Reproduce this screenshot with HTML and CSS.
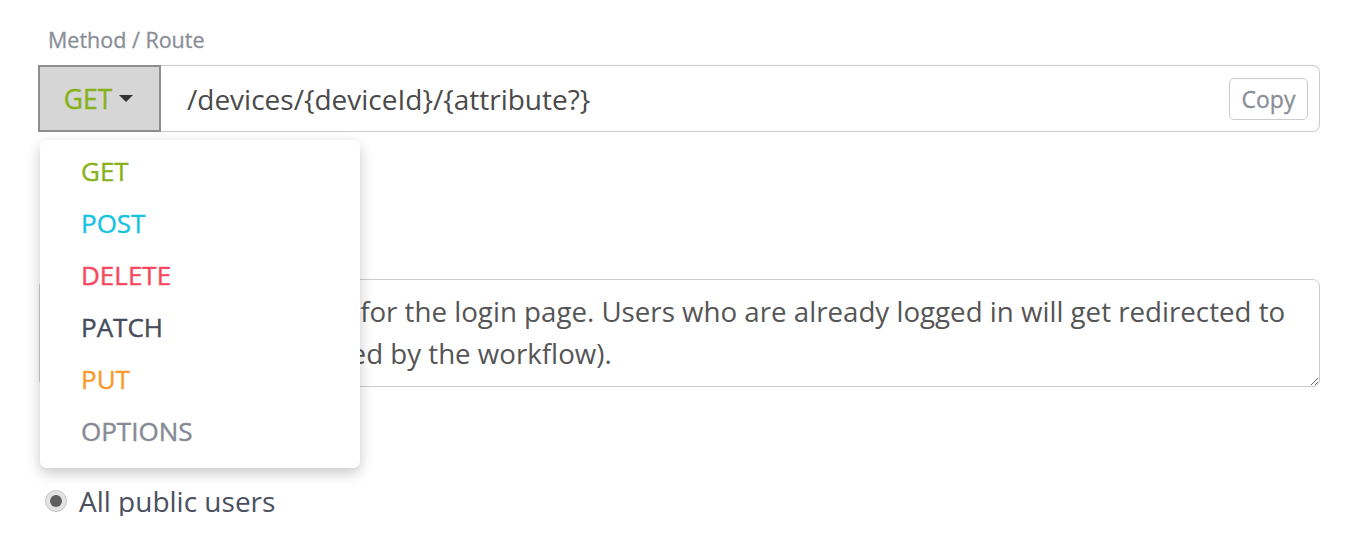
FILE: index.html
```html
<!DOCTYPE html>
<html>
<head>
<meta charset="utf-8">
<link rel="stylesheet" href="styles.css">
</head>
<body>
<div class="form">
  <div class="label">Method / Route</div>
  <div class="route-row">
    <div class="method-select">
      <span class="method get">GET</span>
      <span class="caret"></span>
    </div>
    <div class="route-input">
      <span class="route-text">/devices/{deviceId}/{attribute?}</span>
      <button class="copy-btn">Copy</button>
    </div>
    <ul class="menu">
      <li class="menu-item get">GET</li>
      <li class="menu-item post">POST</li>
      <li class="menu-item delete">DELETE</li>
      <li class="menu-item patch">PATCH</li>
      <li class="menu-item put">PUT</li>
      <li class="menu-item options">OPTIONS</li>
    </ul>
  </div>
  <textarea class="desc">Set a default route for the login page. Users who are already logged in will get redirected to
the  page (as defined by the workflow).</textarea>
  <label class="radio-row">
    <span class="radio"><span class="dot"></span></span>
    <span class="radio-text">All public users</span>
  </label>
</div>
</body>
</html>
```
FILE: styles.css
```css
html, body {
  margin: 0;
  padding: 0;
  background: #ffffff;
}
body {
  font-family: "Open Sans", "Noto Sans", sans-serif;
}
.form {
  padding: 27px 40px 0 38px;
  display: flex;
  flex-direction: column;
}
.label {
  font-size: 21.5px;
  line-height: 26px;
  color: #8a8e97;
  -webkit-text-stroke: 0.3px #8a8e97;
  padding-left: 10px;
  margin-bottom: 12px;
}
.route-row {
  position: relative;
  display: flex;
  height: 67px;
}
.method-select {
  box-sizing: border-box;
  width: 123px;
  height: 67px;
  background: #d6d6d6;
  border: 2px solid #8e8e8e;
  display: flex;
  align-items: center;
  justify-content: center;
  gap: 7px;
  padding-right: 2px;
}
.method {
  font-size: 26.5px;
  -webkit-text-stroke: 0.4px #87b21c;
}
.caret {
  width: 0;
  height: 0;
  border-left: 7px solid transparent;
  border-right: 7px solid transparent;
  border-top: 7px solid #333;
}
.route-input {
  flex: 1;
  box-sizing: border-box;
  height: 67px;
  border: 1px solid #cccccc;
  border-left: none;
  border-radius: 0 7px 7px 0;
  display: flex;
  align-items: center;
  padding: 0 11px 0 26px;
}
.route-text {
  flex: 1;
  font-size: 28px;
  color: #4a4a4a;
}
.copy-btn {
  font-family: inherit;
  font-size: 23px;
  color: #8a8e97;
  -webkit-text-stroke: 0.3px #8a8e97;
  background: #fff;
  border: 1px solid #cccccc;
  border-radius: 5px;
  height: 42px;
  width: 79px;
  padding: 0;
}
.get { color: #87b21c; }
.post { color: #16c3e2; }
.delete { color: #f6475f; }
.patch { color: #464c5c; }
.put { color: #f89a2d; }
.options { color: #858a95; }
.menu {
  position: absolute;
  left: 2px;
  top: 75px;
  width: 320px;
  margin: 0;
  padding: 5px 0 11px;
  list-style: none;
  background: #fff;
  border-radius: 7px;
  box-shadow: 0 5px 14px rgba(0, 0, 0, 0.22);
  z-index: 5;
}
.menu-item {
  height: 52px;
  line-height: 52px;
  font-size: 26px;
  padding-left: 41px;
  -webkit-text-stroke: 0.4px currentColor;
}
.desc {
  box-sizing: border-box;
  height: 108px;
  margin: 147px 0 0 1px;
  border: 1px solid #cccccc;
  border-radius: 7px;
  font-family: inherit;
  font-size: 27.7px;
  line-height: 42px;
  color: #555555;
  padding: 10px 20px 10px 74px;
  resize: vertical;
  overflow: hidden;
  white-space: pre;
}
.radio-row {
  display: flex;
  align-items: center;
  gap: 12px;
  padding-left: 7px;
  margin-top: 99px;
  height: 30px;
}
.radio {
  box-sizing: border-box;
  width: 22px;
  height: 22px;
  border-radius: 50%;
  background: #e3e3e3;
  border: 1px solid #c4c4c4;
  display: flex;
  align-items: center;
  justify-content: center;
}
.dot {
  width: 12px;
  height: 12px;
  border-radius: 50%;
  background: #5f5f5f;
}
.radio-text {
  font-size: 28px;
  line-height: 30px;
  color: #4a5060;
}
```
